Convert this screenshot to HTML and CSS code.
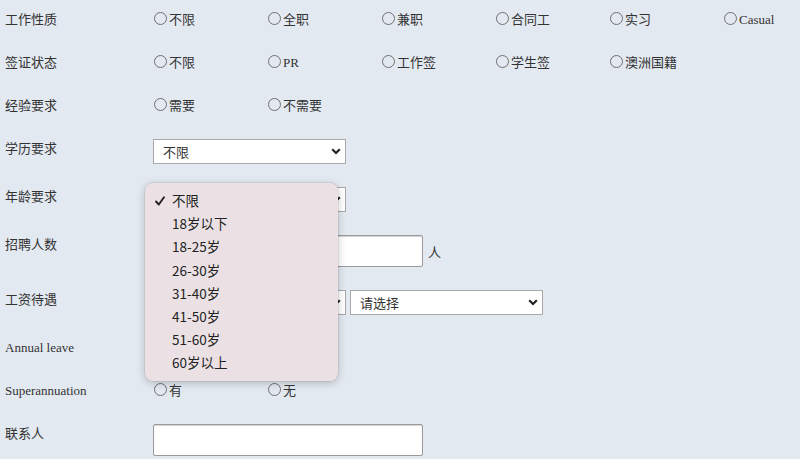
FILE: index.html
```html
<!DOCTYPE html>
<html>
  <head>
    <title>发布职位</title>
    <link rel="stylesheet" href="styles.css">
  </head>
  <body>
    <form class="job-form" action="">
      <div class="row">
        <label class="label">工作性质</label>
        <div class="field">
          <label class="opt"><input type="radio" name="type" />不限</label>
          <label class="opt"><input type="radio" name="type" />全职</label>
          <label class="opt"><input type="radio" name="type" />兼职</label>
          <label class="opt"><input type="radio" name="type" />合同工</label>
          <label class="opt"><input type="radio" name="type" />实习</label>
          <label class="opt"><input type="radio" name="type" />Casual</label>
        </div>
      </div>
      <div class="row">
        <label class="label">签证状态</label>
        <div class="field">
          <label class="opt"><input type="radio" name="visa" />不限</label>
          <label class="opt"><input type="radio" name="visa" />PR</label>
          <label class="opt"><input type="radio" name="visa" />工作签</label>
          <label class="opt"><input type="radio" name="visa" />学生签</label>
          <label class="opt"><input type="radio" name="visa" />澳洲国籍</label>
        </div>
      </div>
      <div class="row">
        <label class="label">经验要求</label>
        <div class="field">
          <label class="opt"><input type="radio" name="exp" />需要</label>
          <label class="opt"><input type="radio" name="exp" />不需要</label>
        </div>
      </div>
      <div class="row">
        <label class="label">学历要求</label>
        <div class="field">
          <select class="sel"><option>不限</option></select>
        </div>
      </div>
      <div class="row">
        <label class="label">年龄要求</label>
        <div class="field popup-anchor">
          <select class="sel"><option>不限</option></select>
          <ul class="popup">
            <li class="checked"><svg class="tick" width="10" height="10" viewBox="0 0 10 10"><polyline points="1,5.5 3.8,8.5 9,1.2" fill="none" stroke="#222" stroke-width="1.9" stroke-linecap="round" stroke-linejoin="round"/></svg>不限</li>
            <li>18岁以下</li>
            <li>18-25岁</li>
            <li>26-30岁</li>
            <li>31-40岁</li>
            <li>41-50岁</li>
            <li>51-60岁</li>
            <li>60岁以上</li>
          </ul>
        </div>
      </div>
      <div class="row">
        <label class="label">招聘人数</label>
        <div class="field">
          <input type="text" class="txt" /><span class="unit">人</span>
        </div>
      </div>
      <div class="row">
        <label class="label">工资待遇</label>
        <div class="field">
          <select class="sel"><option>请选择</option></select>
          <select class="sel"><option>请选择</option></select>
        </div>
      </div>
      <div class="row">
        <label class="label">Annual leave</label>
        <div class="field">
          <label class="opt"><input type="radio" name="leave" />有</label>
          <label class="opt"><input type="radio" name="leave" />无</label>
        </div>
      </div>
      <div class="row">
        <label class="label">Superannuation</label>
        <div class="field">
          <label class="opt"><input type="radio" name="super" />有</label>
          <label class="opt"><input type="radio" name="super" />无</label>
        </div>
      </div>
      <div class="row">
        <label class="label">联系人</label>
        <div class="field">
          <input type="text" class="txt" />
        </div>
      </div>
    </form>
  </body>
</html>
```

FILE: styles.css
```css
body {
  margin: 0;
  background: #e3e9f1;
  color: #333;
  font-family: "Liberation Serif", "Noto Sans CJK SC", serif;
  font-size: 13px;
}

.job-form { display: flex; flex-direction: column; gap: 23px; padding: 10px 0 0 5px; }

.row { display: flex; align-items: flex-start; }
.label { width: 148px; flex: none; line-height: 20px; }
.field { display: flex; align-items: center; gap: 4px; }

.opt { width: 114px; display: flex; align-items: flex-start; line-height: 20px; }
.field .opt { margin-right: -4px; }
.opt input {
  appearance: none; -webkit-appearance: none;
  width: 13px; height: 13px; margin: 2px 2px 0 1px;
  border: 1px solid #6f6f6f; border-radius: 50%; background: transparent;
  box-sizing: border-box;
}

.sel {
  appearance: none; -webkit-appearance: none;
  width: 193px; height: 25px; box-sizing: border-box;
  border: 1px solid #a9a9a9; border-radius: 0; background-color: #fff;
  padding: 0 0 0 9px; color: #333;
  font-family: "Noto Sans CJK SC", "Liberation Sans", sans-serif; font-size: 13px;
  background-image: url("data:image/svg+xml;utf8,<svg xmlns='http://www.w3.org/2000/svg' width='10' height='7' viewBox='0 0 10 7'><polyline points='1.2,1.2 5,5 8.8,1.2' fill='none' stroke='%23222' stroke-width='2.2'/></svg>");
  background-repeat: no-repeat; background-position: right 4px center;
}

.txt {
  width: 270px; height: 32px; box-sizing: border-box; margin: 0;
  border: 1px solid #9a9a9a; border-radius: 2px; background: #fff;
  box-shadow: inset 0 1px 1px rgba(0,0,0,0.18);
}
.unit { margin-left: 1px; font-family: "Noto Sans CJK SC", sans-serif; }

.popup-anchor { position: relative; }
.popup {
  position: absolute; left: -8px; top: -4px; z-index: 2;
  width: 193px; box-sizing: border-box; margin: 0; padding: 6px 0;
  list-style: none; background: #ebe1e5; border-radius: 8px;
  box-shadow: 0 2px 8px rgba(0,0,0,0.22), 0 0 0 0.5px rgba(0,0,0,0.12);
  font-family: "Noto Sans CJK SC", "Liberation Sans", sans-serif; font-size: 13.5px; color: #222;
}
.popup li { height: 23.2px; line-height: 23px; padding-left: 27px; position: relative; }
.popup .tick { position: absolute; left: 10px; top: 7px; }
```
